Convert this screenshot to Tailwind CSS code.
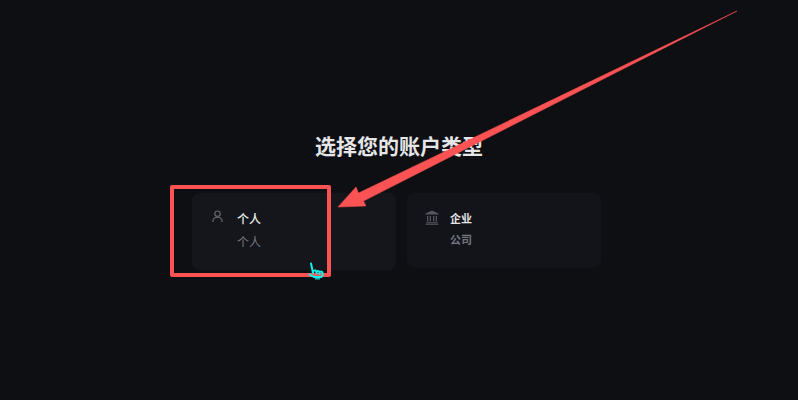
<!DOCTYPE html>
<html lang="zh-CN">
  <head>
    <meta charset="UTF-8" />
    <title>选择您的账户类型</title>
    <script src="https://cdn.jsdelivr.net/npm/@tailwindcss/browser@4"></script>
  </head>
  <body class="bg-[#0e0f13] overflow-hidden font-['Inter','Noto_Sans_CJK_SC',sans-serif]">
    <main class="relative w-[798px] h-[400px] pt-[133px]">
      <h1 class="text-[21px] leading-[28px] font-bold text-[#e6e6e8] text-center">选择您的账户类型</h1>

      <div class="flex gap-[11px] ml-[192px] mt-[32px]">
        <!-- personal -->
        <div class="w-[204px] h-[77px] rounded-[8px] bg-[#15161b] flex pl-[20px] pt-[15px]">
          <svg class="w-[11px] h-[13px] mt-[2px] text-[#66676e]" viewBox="0 0 13 15" fill="none" stroke="currentColor" stroke-width="1.4">
            <circle cx="6.5" cy="4.2" r="3.2" />
            <path d="M1 14c0-3.4 2.2-5.6 5.5-5.6S12 10.600 12 14" />
          </svg>
          <div class="ml-[14px] text-[12px] leading-[23px]">
            <div class="font-medium text-[#ececee]">个人</div>
            <div class="text-[#77787e]">个人</div>
          </div>
        </div>

        <!-- company -->
        <div class="w-[194px] h-[75px] rounded-[8px] bg-[#13141a] flex pl-[18px] pt-[16px]">
          <svg class="w-[14px] h-[15px] mt-[1px] text-[#55565f]" viewBox="0 0 14 15" fill="currentColor">
            <path d="M7 0.500 13.500 3.500V4.500H0.500V3.500Z" />
            <path d="M2 6h1.300v5.500H2zM4.700 6H6v5.500H4.700zM8 6h1.300v5.500H8zM10.700 6H12v5.500h-1.300z" />
            <path d="M1.200 12.300h11.600v1H1.200zM0.500 13.800h13v1h-13z" />
          </svg>
          <div class="ml-[11px] text-[11px] leading-[21px] font-bold">
            <div class="text-[#e4e4e6]">企业</div>
            <div class="text-[#74757c]">公司</div>
          </div>
        </div>
      </div>

      <!-- annotation over the page -->
      <div class="absolute left-[170px] top-[185px] w-[161px] h-[92px] border-[4px] border-[#fb5254] rounded-[2px]"></div>

      <svg class="absolute left-0 top-0 w-[798px] h-[400px]" viewBox="0 0 798 400">
        <path d="M737 11 363.500 201 366 206 338 207 356 187 358.500 193Z" fill="#fb5254" stroke="#fb5254" stroke-width="0.500" stroke-linejoin="round" />
        <!-- cursor -->
        <path d="M311 263.500 313 273M313 272c1-2.500 3-2.500 3.500 0v1.500M316.500 272.500c.5-2 2.500-2 3 0v1.500M319.500 272.500c.5-1.500 2.500-1.500 3 0v3l-1 1.500h-7l-5-2.500" fill="none" stroke="#14f0ea" stroke-width="2" stroke-linecap="round" stroke-linejoin="round" />
        <path d="M315 278.800h5" stroke="#14f0ea" stroke-width="1.400" opacity="0.800" />
      </svg>
    </main>
  </body>
</html>
